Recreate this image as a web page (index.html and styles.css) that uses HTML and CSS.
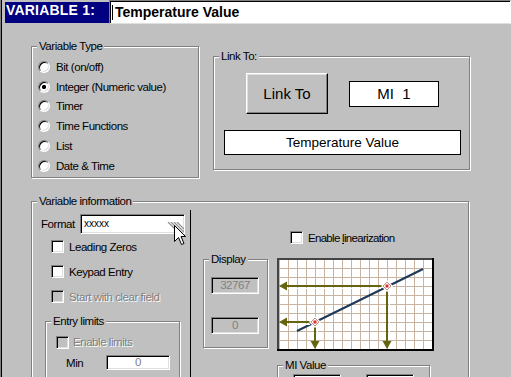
FILE: index.html
```html
<!DOCTYPE html>
<html lang="en">
<head>
    <meta charset="UTF-8">
    <meta name="viewport" content="width=device-width, initial-scale=1.0">
    <title>Variable 1</title>
    <link rel="stylesheet" href="styles.css">
</head>
<body>
<div class="window">
    <!-- Заголовок переменной -->
    <div class="title-bar">
        <div class="title-label">VARIABLE 1:</div>
        <div class="title-input"><span class="caret"></span>Temperature Value</div>
    </div>

    <div class="content">
        <div class="top-row">
            <!-- Тип переменной -->
            <div class="group type-group">
                <div class="group-title">Variable Type</div>
                <div class="radio-list">
                    <div class="radio-row"><span class="radio"></span>Bit (on/off)</div>
                    <div class="radio-row"><span class="radio checked"></span>Integer (Numeric value)</div>
                    <div class="radio-row"><span class="radio"></span>Timer</div>
                    <div class="radio-row"><span class="radio"></span>Time Functions</div>
                    <div class="radio-row"><span class="radio"></span>List</div>
                    <div class="radio-row"><span class="radio"></span>Date &amp; Time</div>
                </div>
            </div>

            <!-- Привязка -->
            <div class="group link-group">
                <div class="group-title">Link To:</div>
                <div class="link-row">
                    <div class="button">Link To</div>
                    <div class="box mi-box">MI  1</div>
                </div>
                <div class="box name-box">Temperature Value</div>
            </div>
        </div>

        <!-- Информация о переменной -->
        <div class="group info-group">
            <div class="group-title">Variable information</div>
            <div class="info-body">
                <div class="info-left">
                    <div class="format-row">
                        <span class="format-label">Format</span>
                        <div class="edit format-edit">xxxxx
                            <svg class="grip" width="17" height="12" viewBox="0 0 17 12">
                                <path d="M1 0L12 11M4 0L15 11M7 0L17 10M10 0L17 7" stroke="#8c8c8c" stroke-width="1.2" fill="none"/>
                            </svg>
                            <svg class="cursor" width="13" height="21" viewBox="0 0 13 21">
                                <path d="M0.5 0.5V16.5L4.5 12.5L7.5 19.5L10 18.5L7 11.5H11.5Z" fill="#fff" stroke="#000" stroke-linejoin="miter"/>
                            </svg>
                        </div>
                    </div>
                    <div class="check-row"><span class="check"></span>Leading Zeros</div>
                    <div class="check-row"><span class="check"></span>Keypad Entry</div>
                    <div class="check-row disabled"><span class="check"></span>Start with clear field</div>

                    <div class="group limits-group">
                        <div class="group-title">Entry limits</div>
                        <div class="check-row disabled"><span class="check"></span>Enable limits</div>
                        <div class="min-row">
                            <span class="min-label">Min</span>
                            <div class="edit min-edit">0</div>
                        </div>
                    </div>
                </div>

                <div class="divider"></div>

                <div class="info-right">
                    <div class="lin-row"><span class="check"></span><span>Enable <u>l</u>inearization</span></div>
                    <div class="chart-row">
                        <div class="group display-group">
                            <div class="group-title">Display</div>
                            <div class="edit display-edit">32767</div>
                            <div class="edit display-edit second">0</div>
                        </div>
                        <div class="chart-col">
                            <svg class="chart" width="157" height="93" viewBox="0 0 157 93">
                                <defs>
                                    <pattern id="grid" width="9" height="9" x="2" y="1" patternUnits="userSpaceOnUse">
                                        <path d="M0.5 0V9M0 0.5H9" stroke="#c8b4a2" fill="none"/>
                                    </pattern>
                                </defs>
                                <rect width="157" height="93" fill="#fff"/>
                                <rect width="157" height="93" fill="url(#grid)"/>
                                <path d="M20 73L146 11" stroke="#1f3a58" stroke-width="2.2"/>
                                <!-- стрелки -->
                                <g stroke="#66640e" stroke-width="2" fill="none">
                                    <path d="M8 28H110M8 64H38M38 64V84M110 28V84"/>
                                </g>
                                <g stroke="#fff" stroke-width="1" fill="none">
                                    <path d="M10 30.5H104M10 66.5H33M40.5 69V82M112.5 33V82"/>
                                </g>
                                <g fill="#66640e">
                                    <polygon points="2,28 10,23.5 10,32.5"/>
                                    <polygon points="2,64 10,59.5 10,68.5"/>
                                    <polygon points="38,91 33.5,83 42.5,83"/>
                                    <polygon points="110,91 105.5,83 114.5,83"/>
                                </g>
                                <!-- точки -->
                                <g transform="translate(38 64)">
                                    <path d="M0 -6L6 0L0 6L-6 0Z" fill="#fff"/>
                                    <path d="M0 -4L4 0L0 4L-4 0Z" fill="none" stroke="#c49080"/>
                                    <rect x="-1.5" y="-1.5" width="3" height="3" fill="#e02828"/>
                                </g>
                                <g transform="translate(110 28)">
                                    <path d="M0 -6L6 0L0 6L-6 0Z" fill="#fff"/>
                                    <path d="M0 -4L4 0L0 4L-4 0Z" fill="none" stroke="#c49080"/>
                                    <rect x="-1.5" y="-1.5" width="3" height="3" fill="#e02828"/>
                                </g>
                                <rect x="0" y="0" width="157" height="2" fill="#444"/>
                                <rect x="0" y="0" width="2" height="93" fill="#444"/>
                                <rect x="155" y="0" width="2" height="93" fill="#000"/>
                                <rect x="0" y="91" width="157" height="2" fill="#000"/>
                            </svg>

                            <div class="group mi-group">
                                <div class="group-title">MI Value</div>
                                <div class="mi-edits">
                                    <div class="edit mi-edit"></div>
                                    <div class="edit mi-edit"></div>
                                </div>
                            </div>
                        </div>
                    </div>
                </div>
            </div>
        </div>
    </div>
</div>
</body>
</html>
```

FILE: styles.css
```css
/* Общие настройки */
body {
    margin: 0;
    background: #c0c0c0;
    font-family: "Liberation Sans", Arial, sans-serif;
    font-size: 11.5px;
    letter-spacing: -0.45px;
    color: #000;
}

.window {
    height: 377px;
    overflow: hidden;
    border-left: 1px solid #808080;
    box-shadow: inset 1px 0 #000;
}

/* Заголовок */
.title-bar {
    display: flex;
    height: 24px;
}

.title-label {
    box-sizing: border-box;
    width: 104px;
    height: 21px;
    margin: 2px 0 0 4px;
    padding-left: 1px;
    background: #000080;
    color: #fff;
    font-size: 14px;
    font-weight: bold;
    line-height: 16px;
    letter-spacing: 0.2px;
}

.title-input {
    flex: 1;
    box-sizing: border-box;
    height: 24px;
    padding: 3px 0 0 2px;
    border: 1px solid;
    border-color: #808080 #fff #dfdfdf #808080;
    box-shadow: inset 1px 1px #000;
    background: #fff;
    font-size: 14px;
    font-weight: bold;
    line-height: 16px;
    letter-spacing: 0;
}

.caret {
    display: inline-block;
    width: 1px;
    height: 15px;
    margin-right: 2px;
    vertical-align: -3px;
    background: #000;
}

/* Основная область */
.content {
    padding: 22px 0 0 30px;
}

.top-row {
    display: flex;
    align-items: flex-start;
}

/* Рамки групп */
.group {
    box-sizing: border-box;
    border: 1px solid #808080;
    box-shadow: inset 1px 1px #fff, 1px 1px #fff;
}

.group-title {
    width: fit-content;
    margin: -7px 0 0 5px;
    padding: 0 2px;
    line-height: 13px;
    background: #c0c0c0;
}

/* Тип переменной */
.type-group {
    width: 168px;
    height: 132px;
}

.radio-list {
    margin-top: 4px;
    padding-left: 6px;
}

.radio-row {
    display: flex;
    align-items: center;
    gap: 6px;
    height: 19.75px;
}

.radio {
    flex: none;
    box-sizing: border-box;
    width: 12px;
    height: 12px;
    border: 1px solid;
    border-color: #808080 #fff #fff #808080;
    border-radius: 50%;
    box-shadow: inset 1px 1px #000, inset -1px -1px #dfdfdf;
    background: #fff;
}

.radio.checked {
    background: radial-gradient(circle, #000 1.8px, #fff 2.4px);
}

/* Привязка */
.link-group {
    width: 257px;
    height: 114px;
    margin: 10px 0 0 14px;
}

.link-row {
    display: flex;
    align-items: center;
    gap: 21px;
    margin: 10px 0 0 32px;
}

.button {
    box-sizing: border-box;
    width: 82px;
    height: 41px;
    display: flex;
    align-items: center;
    justify-content: center;
    border: 1px solid;
    border-color: #fff #000 #000 #fff;
    box-shadow: inset -1px -1px #808080, inset 1px 1px #dfdfdf;
    font-size: 15px;
    letter-spacing: 0;
}

.box {
    box-sizing: border-box;
    display: flex;
    align-items: center;
    justify-content: center;
    border: 1px solid #000;
    background: #fff;
    letter-spacing: 0;
}

.mi-box {
    width: 90px;
    height: 26px;
    font-size: 15px;
    white-space: pre;
}

.name-box {
    width: 237px;
    height: 25px;
    margin: 16px 0 0 10px;
    font-size: 13.5px;
}

/* Информация о переменной */
.info-group {
    width: 438px;
    height: 200px;
    margin-top: 23px;
}

.info-body {
    display: flex;
    align-items: stretch;
    height: 200px;
}

.info-left {
    width: 158px;
    padding-left: 9px;
    box-sizing: border-box;
}

.format-row {
    display: flex;
    align-items: center;
    height: 20px;
    margin-top: 6px;
}

.format-label {
    width: 39px;
}

.edit {
    box-sizing: border-box;
    border: 1px solid;
    border-color: #808080 #fff #fff #808080;
    box-shadow: inset 1px 1px #000, inset -1px -1px #dfdfdf;
    background: #fff;
}

.format-edit {
    position: relative;
    width: 105px;
    height: 20px;
    padding-left: 3px;
    font-size: 10px;
    line-height: 17px;
    letter-spacing: 0;
}

.grip {
    position: absolute;
    left: 86px;
    top: 7px;
}

.cursor {
    position: absolute;
    left: 93px;
    top: 10px;
}

.check-row {
    display: flex;
    align-items: center;
    gap: 5px;
    height: 25px;
    padding-left: 10px;
}

.check {
    flex: none;
    box-sizing: border-box;
    width: 13px;
    height: 13px;
    border: 1px solid;
    border-color: #808080 #fff #fff #808080;
    box-shadow: inset 1px 1px #000, inset -1px -1px #dfdfdf;
    background: #fff;
}

.disabled {
    color: #808080;
    text-shadow: 1px 1px #fff;
}

.disabled .check {
    background: #c0c0c0;
}

/* Пределы ввода */
.limits-group {
    width: 135px;
    height: 80px;
    margin: 12px 0 0 4px;
}

.limits-group .check-row {
    height: 20px;
    margin-top: 4px;
    gap: 4px;
}

.min-row {
    display: flex;
    align-items: center;
    height: 15px;
    margin-top: 3px;
}

.min-label {
    width: 40px;
    margin-left: 20px;
}

.min-edit {
    width: 64px;
    height: 15px;
    line-height: 13px;
    text-align: center;
    color: #808080;
}

.divider {
    width: 1px;
    margin-top: 2px;
    background: #000;
}

/* Правая часть: линеаризация */
.lin-row {
    display: flex;
    align-items: center;
    gap: 5px;
    height: 13px;
    margin-top: 23px;
    padding-left: 99px;
    letter-spacing: -0.7px;
}

.chart-row {
    display: flex;
    align-items: flex-start;
    margin-top: 14px;
    padding-left: 12px;
}

.display-group {
    width: 65px;
    height: 89px;
    margin-top: 1px;
}

.display-edit {
    width: 48px;
    height: 17px;
    margin: 11px 0 0 7px;
    line-height: 15px;
    text-align: center;
    background: #c0c0c0;
    color: #808080;
}

.display-edit.second {
    margin-top: 23px;
}

.chart-col {
    margin-left: 9px;
}

.chart {
    display: block;
}

.mi-group {
    width: 153px;
    height: 40px;
    margin-top: 14px;
}

.mi-edits {
    display: flex;
    gap: 25px;
    margin: 2px 0 0 15px;
}

.mi-edit {
    width: 48px;
    height: 17px;
}
```
